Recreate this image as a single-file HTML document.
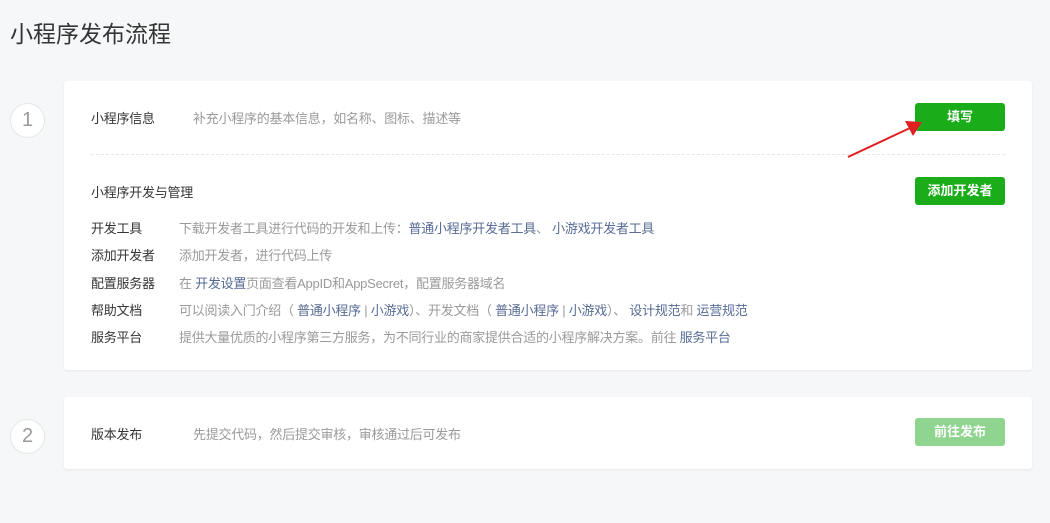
<!DOCTYPE html>
<html><head><meta charset="utf-8"><style>
*{margin:0;padding:0;box-sizing:border-box}
body{width:1050px;height:523px;background:#f6f7f9;font-family:"Liberation Sans","Noto Sans CJK SC",sans-serif;font-size:13px;color:#353535;position:relative;overflow:hidden}
.abs{position:absolute;white-space:nowrap}
h1{position:absolute;left:10px;top:15px;font-size:23px;font-weight:normal;color:#353535}
.card{position:absolute;left:64px;width:968px;background:#fff;border-radius:3px;box-shadow:0 1px 2px rgba(0,0,0,0.06)}
.num{position:absolute;left:10px;width:35px;height:35px;border:1px solid #e4e6e8;border-radius:50%;background:#fff;color:#9a9a9a;font-size:20px;text-align:center;line-height:33px;font-family:"Liberation Sans",sans-serif}
.btn{position:absolute;left:915px;width:90px;height:28px;background:#1aad19;color:#fff;border-radius:3px;text-align:center;line-height:28px;font-size:13px;font-weight:bold}
.g{color:#9a9a9a}
a{color:#576b95;text-decoration:none}
.lh{line-height:16px;letter-spacing:-0.25px}
</style></head><body>
<h1>小程序发布流程</h1>
<div class="num" style="top:103px">1</div>
<div class="num" style="top:419px">2</div>
<div class="card" style="top:81px;height:289px"></div>
<div class="card" style="top:397px;height:72px"></div>
<div class="abs lh" style="left:91px;top:111px">小程序信息</div>
<div class="abs lh g" style="left:193px;top:111px">补充小程序的基本信息，如名称、图标、描述等</div>
<div class="btn" style="top:103px">填写</div>
<div class="abs" style="left:91px;top:154px;width:914px;border-top:1px dashed #e4e6e8"></div>
<div class="abs lh" style="left:91px;top:185px">小程序开发与管理</div>
<div class="btn" style="top:177px">添加开发者</div>
<div class="abs lh" style="left:91px;top:221px">开发工具</div>
<div class="abs lh g" style="left:179px;top:221px">下载开发者工具进行代码的开发和上传：<a>普通小程序开发者工具</a>、 <a>小游戏开发者工具</a></div>
<div class="abs lh" style="left:91px;top:248px">添加开发者</div>
<div class="abs lh g" style="left:179px;top:248px">添加开发者，进行代码上传</div>
<div class="abs lh" style="left:91px;top:276px">配置服务器</div>
<div class="abs lh g" style="left:179px;top:276px">在 <a>开发设置</a>页面查看AppID和AppSecret，配置服务器域名</div>
<div class="abs lh" style="left:91px;top:303px">帮助文档</div>
<div class="abs lh g" style="left:179px;top:303px">可以阅读入门介绍（ <a>普通小程序</a> | <a>小游戏</a>）、开发文档（ <a>普通小程序</a> | <a>小游戏</a>）、 <a>设计规范</a>和 <a>运营规范</a></div>
<div class="abs lh" style="left:91px;top:330px">服务平台</div>
<div class="abs lh g" style="left:179px;top:330px">提供大量优质的小程序第三方服务，为不同行业的商家提供合适的小程序解决方案。前往 <a>服务平台</a></div>
<div class="abs lh" style="left:91px;top:427px">版本发布</div>
<div class="abs lh g" style="left:193px;top:427px">先提交代码，然后提交审核，审核通过后可发布</div>
<div class="btn" style="top:418px;background:#8fd48f">前往发布</div>
<svg class="abs" style="left:0;top:0" width="1050" height="523"><line x1="848" y1="157" x2="910" y2="128" stroke="#e02020" stroke-width="2"/><polygon points="922,122 905,121 913,136" fill="#e02020"/></svg>
</body></html>
